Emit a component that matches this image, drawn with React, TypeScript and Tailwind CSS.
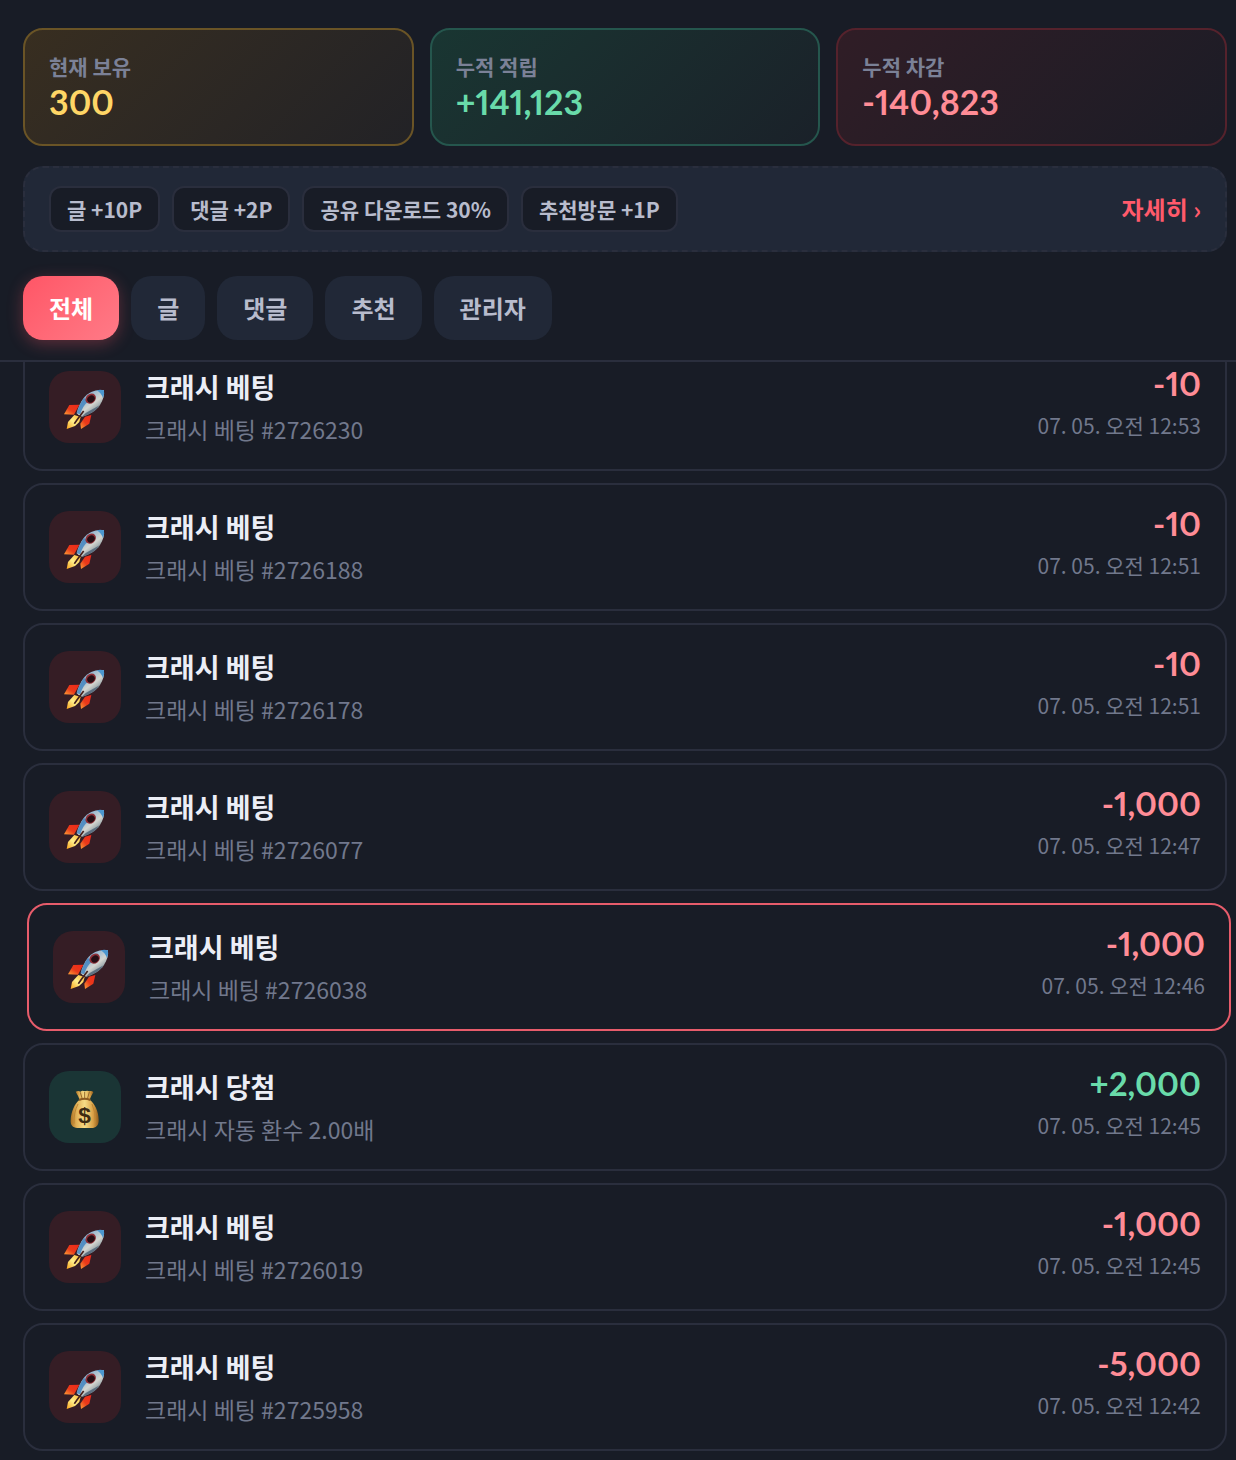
import React, { useState } from "react";

interface PointLog {
  id: number;
  type: "bet" | "win";
  title: string;
  detail: string;
  amount: string;
  date: string;
}

const summaries = [
  {
    label: "현재 보유",
    value: "300",
    card: "border-[#6a5426] from-[#382e20] to-[#222226]",
    text: "text-[#ffd666]",
  },
  {
    label: "누적 적립",
    value: "+141,123",
    card: "border-[#25564d] from-[#193632] to-[#1a2129]",
    text: "text-[#69dbaa]",
  },
  {
    label: "누적 차감",
    value: "-140,823",
    card: "border-[#55222c] from-[#301d26] to-[#1b1c26]",
    text: "text-[#ff8c96]",
  },
];

const rules = ["글 +10P", "댓글 +2P", "공유 다운로드 30%", "추천방문 +1P"];

const tabs = ["전체", "글", "댓글", "추천", "관리자"];

const logs: PointLog[] = [
  { id: 1, type: "bet", title: "크래시 베팅", detail: "크래시 베팅 #2726230", amount: "-10", date: "07. 05. 오전 12:53" },
  { id: 2, type: "bet", title: "크래시 베팅", detail: "크래시 베팅 #2726188", amount: "-10", date: "07. 05. 오전 12:51" },
  { id: 3, type: "bet", title: "크래시 베팅", detail: "크래시 베팅 #2726178", amount: "-10", date: "07. 05. 오전 12:51" },
  { id: 4, type: "bet", title: "크래시 베팅", detail: "크래시 베팅 #2726077", amount: "-1,000", date: "07. 05. 오전 12:47" },
  { id: 5, type: "bet", title: "크래시 베팅", detail: "크래시 베팅 #2726038", amount: "-1,000", date: "07. 05. 오전 12:46" },
  { id: 6, type: "win", title: "크래시 당첨", detail: "크래시 자동 환수 2.00배", amount: "+2,000", date: "07. 05. 오전 12:45" },
  { id: 7, type: "bet", title: "크래시 베팅", detail: "크래시 베팅 #2726019", amount: "-1,000", date: "07. 05. 오전 12:45" },
  { id: 8, type: "bet", title: "크래시 베팅", detail: "크래시 베팅 #2725958", amount: "-5,000", date: "07. 05. 오전 12:42" },
];

const ACTIVE_ID = 5;

const RocketIcon = () => (
  <svg viewBox="0 0 216 216" className="h-[72px] w-[72px]" aria-hidden="true">
    <defs>
      <linearGradient id="rocketBody" x1="0" y1="0" x2="0.8" y2="1">
        <stop offset="0.1" stopColor="#4d8fc8" />
        <stop offset="0.35" stopColor="#9dbbd2" />
        <stop offset="0.6" stopColor="#d3d5d0" />
        <stop offset="0.8" stopColor="#8f9da3" />
        <stop offset="1" stopColor="#356a9e" />
      </linearGradient>
      <linearGradient id="rocketFin" x1="1" y1="0" x2="0" y2="1">
        <stop offset="0" stopColor="#f0281a" />
        <stop offset="0.55" stopColor="#ea3a1a" />
        <stop offset="1" stopColor="#ffa238" />
      </linearGradient>
      <linearGradient id="rocketFlame" x1="1" y1="0" x2="0" y2="1">
        <stop offset="0" stopColor="#ffb52e" />
        <stop offset="0.5" stopColor="#fff08a" />
        <stop offset="1" stopColor="#f9a01b" />
      </linearGradient>
    </defs>
    <path d="M61 102 L91 101 L75 131 L45 130 Z" fill="url(#rocketFin)" />
    <path d="M108 137 L127 132 L121 158 L96 174 L94 158 Z" fill="url(#rocketFin)" />
    <path d="M76 132 L95 138 L91 153 L78 165 L53 174 L57 153 Z" fill="url(#rocketFlame)" />
    <path
      d="M165 58 C143 54 119 62 104 81 C94 94 86 113 83 127 Q90 135 99 137 C119 132 142 120 153 102 C162 87 167 74 165 58 Z"
      fill="url(#rocketBody)"
    />
    <path d="M105 81 C94 96 87 113 83 127 L94 130 Q101 104 119 91 Z" fill="#347cbe" opacity="0.75" />
    <path d="M143 58 Q157 66 162 82 Q167 71 165 58 Q153 55 143 58 Z" fill="#4b97d0" />
    <path d="M99 137 Q135 128 152 103 Q128 116 110 126 Z" fill="#4b6275" opacity="0.8" />
    <path d="M104 120 Q93 134 76 158" stroke="#44201d" strokeWidth="5" fill="none" />
    <ellipse cx="125" cy="83" rx="17" ry="14" transform="rotate(-40 125 83)" fill="#8f3038" />
    <ellipse cx="126" cy="84" rx="12" ry="10" transform="rotate(-40 126 84)" fill="#250e15" />
  </svg>
);

const MoneyBagIcon = () => (
  <svg viewBox="0 0 216 216" className="h-[72px] w-[72px]" aria-hidden="true">
    <defs>
      <linearGradient id="bagBody">
        <stop offset="0" stopColor="#a96f22" />
        <stop offset="0.2" stopColor="#e0af55" />
        <stop offset="0.5" stopColor="#f6dc86" />
        <stop offset="0.8" stopColor="#d9a146" />
        <stop offset="1" stopColor="#925c1b" />
      </linearGradient>
    </defs>
    <path
      d="M80 62 Q88 58 94 62 Q100 57 107 61 Q115 57 121 61 Q129 58 133 64 Q127 74 122 86 L92 86 Q87 73 80 62 Z"
      fill="url(#bagBody)"
    />
    <path
      d="M92 86 L122 86 C137 97 149 121 149 146 C150 164 140 170 128 171 L85 171 C71 170 64 163 65 147 C66 122 77 97 92 86 Z"
      fill="url(#bagBody)"
    />
    <path d="M94 64 L99 81 M107 63 L107 81 M121 63 L116 81" stroke="#97692c" strokeWidth="3" />
    <path d="M90 87 Q107 80 124 87" stroke="#8d5b21" strokeWidth="6" fill="none" />
    <path d="M87 99 Q74 123 75 158 M129 99 Q140 122 140 157" stroke="#bd8635" strokeWidth="3" fill="none" />
    <text
      x="107"
      y="156"
      textAnchor="middle"
      fontSize="68"
      fontWeight="700"
      fontFamily="Liberation Sans, sans-serif"
      fill="#3c2a12"
    >
      $
    </text>
  </svg>
);

const LogItem: React.FC<{ log: PointLog }> = ({ log }) => {
  const isWin = log.type === "win";
  const isActive = log.id === ACTIVE_ID;

  return (
    <li
      className={`flex h-32 items-center gap-6 rounded-[20px] border-2 px-6 ${
        isActive ? "translate-x-1 border-[#e75c6b]" : "border-[#2a2e3d]"
      }`}
    >
      <div
        className={`shrink-0 overflow-hidden rounded-[20px] ${
          isWin ? "bg-[#1a3535]" : "bg-[#351d25]"
        }`}
      >
        {isWin ? <MoneyBagIcon /> : <RocketIcon />}
      </div>
      <div className="min-w-0 flex-1">
        <p className="truncate text-[27px] leading-10 font-bold text-[#eceef6]">
          {log.title}
        </p>
        <p className="mt-1 truncate text-[23px] leading-9 text-[#71788c]">
          {log.detail}
        </p>
      </div>
      <div className="shrink-0 pb-2 text-right">
        <p
          className={`font-[Lato,sans-serif] text-[33px] leading-10 font-bold proportional-nums ${
            isWin ? "text-[#69dbaa]" : "text-[#ff8c96]"
          }`}
        >
          {log.amount}
        </p>
        <p className="mt-1 text-[21px] leading-9 text-[#71788c]">{log.date}</p>
      </div>
    </li>
  );
};

const App: React.FC = () => {
  const [activeTab, setActiveTab] = useState("전체");

  return (
    <div className="min-h-screen overflow-x-clip bg-[#181c26] font-['Noto_Sans_CJK_KR',sans-serif]">
      <header className="sticky top-0 z-10 border-b-2 border-[#2a2e3d] bg-[#181c26] pt-7 pr-[9px] pb-5 pl-[23px]">
        {/* Point summary */}
        <section className="grid grid-cols-3 gap-4">
          {summaries.map((item) => (
            <div
              key={item.label}
              className={`h-[118px] rounded-[20px] border-2 bg-linear-135 px-6 pt-5 ${item.card}`}
            >
              <p className="text-[21px] leading-8 font-bold text-[#7b8197]">
                {item.label}
              </p>
              <p
                className={`font-[Lato,sans-serif] text-[34px] leading-10 font-bold proportional-nums ${item.text}`}
              >
                {item.value}
              </p>
            </div>
          ))}
        </section>

        {/* Earning rules */}
        <section className="mt-5 flex items-center justify-between rounded-[20px] border-2 border-dashed border-[#2a2e3d] bg-[#212837] px-6 py-[18px]">
          <ul className="flex flex-wrap gap-3">
            {rules.map((rule) => (
              <li
                key={rule}
                className="rounded-xl border-2 border-[#2a2e3d] bg-[#181c26] px-4 text-[21px] leading-[42px] font-bold text-[#b8bccd]"
              >
                {rule}
              </li>
            ))}
          </ul>
          <a
            href="#detail"
            className="shrink-0 text-2xl leading-8 font-bold text-[#ff5a6b]"
          >
            자세히 ›
          </a>
        </section>

        {/* Filter tabs */}
        <nav className="mt-6 flex gap-3">
          {tabs.map((tab) => (
            <button
              key={tab}
              type="button"
              onClick={() => setActiveTab(tab)}
              className={`h-16 rounded-[20px] px-[26px] text-2xl font-bold ${
                activeTab === tab
                  ? "bg-linear-135 from-[#ff5566] to-[#ff7a87] text-white shadow-[0_4px_16px_rgba(255,85,102,0.3)]"
                  : "bg-[#212837] text-[#b8bccd]"
              }`}
            >
              {tab}
            </button>
          ))}
        </nav>
      </header>

      {/* Point history, scrolls under the header */}
      <ul className="-mt-[19px] flex flex-col gap-3 pr-[9px] pl-[23px]">
        {logs.map((log) => (
          <LogItem key={log.id} log={log} />
        ))}
      </ul>
    </div>
  );
};

export default App;
